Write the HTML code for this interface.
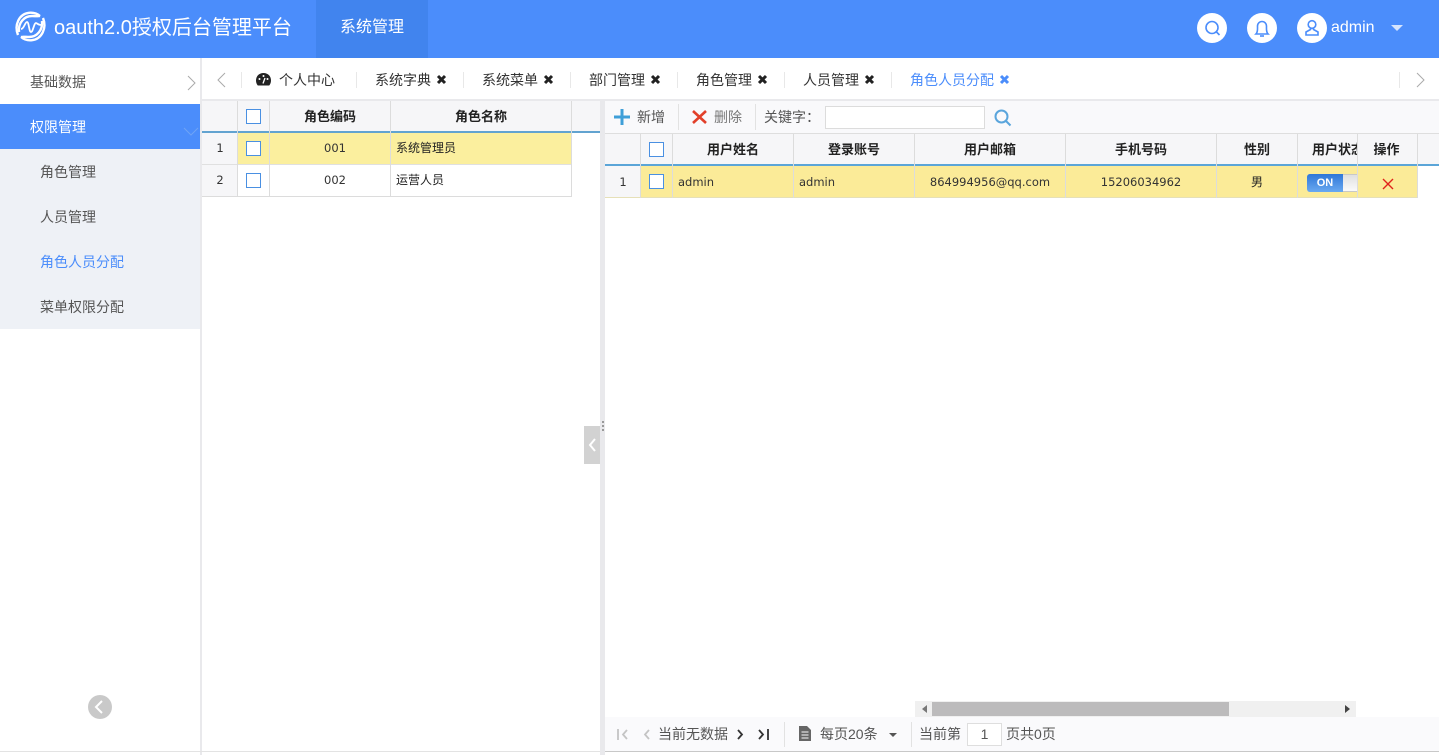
<!DOCTYPE html>
<html lang="zh-CN"><head><meta charset="utf-8"><title>oauth2.0授权后台管理平台</title>
<style>
html,body{margin:0;padding:0;background:#fff}
body{width:1439px;height:755px;overflow:hidden;position:relative;font-family:"Liberation Sans","Noto Sans CJK SC",sans-serif;font-size:14px;color:#333}
.a{position:absolute;box-sizing:border-box}
.t{position:absolute;white-space:nowrap;line-height:18px;height:18px}
.c{text-align:center}
.b{font-weight:700;color:#222;font-size:13px}
.d{font-family:"DejaVu Sans","Noto Sans CJK SC",sans-serif;font-size:11.5px;color:#333}
.s{font-size:12px;color:#222}
.g{color:#666}
.v{position:absolute;width:1px;background:#dcdcdc}
.k{position:absolute;width:15px;height:15px;border:1px solid #4a90e2;background:#fff;box-sizing:border-box}
svg{position:absolute;overflow:visible}
.x{top:75px;fill:none;stroke:#222;stroke-width:3}
</style></head><body>

<!-- header -->
<div class="a" style="left:0;top:0;width:1439px;height:58px;background:#4b8dfb"></div>
<div class="a" style="left:316px;top:0;width:112px;height:58px;background:#4184ee"></div>
<svg style="left:15px;top:11px" width="31" height="31" viewBox="0 0 31 31" fill="none" stroke="#fff">
<path d="M3 24C-1 14 4 3 14 1.800c4-.4 8 .6 11 3.200" stroke-width="2.400"/>
<path d="M4 21C3 12 9 5 17 5c3 0 6 .5 8 0" stroke-width="2.400"/>
<path d="M28 7c4 10-1 21-11 22.200-4 .4-8-.6-11-3.200" stroke-width="2.400"/>
<path d="M27 10c1 9-5 16-13 16-3 0-6-.5-8 0" stroke-width="2.400"/>
<path d="M6 18c3 0 4-7 6-7 2 0 2 10 4 10 2 0 3-9 5-9 1 0 2 2 5 2" stroke-width="1.800"/>
</svg>
<div class="t" style="left:54px;top:15px;height:26px;line-height:26px;font-size:20px;color:#fff">oauth2.0授权后台管理平台</div>
<div class="t c" style="left:316px;top:19px;width:112px;font-size:16px;color:#fff">系统管理</div>
<div class="a" style="left:1197px;top:13px;width:30px;height:30px;border-radius:50%;background:#fff"></div>
<svg style="left:1197px;top:13px" width="30" height="30" fill="none" stroke="#4b8dfb" stroke-width="1.600"><circle cx="15" cy="14.500" r="6"/><path d="M19.500 19l3 3"/></svg>
<div class="a" style="left:1247px;top:13px;width:30px;height:30px;border-radius:50%;background:#fff"></div>
<svg style="left:1247px;top:13px" width="30" height="30" fill="none" stroke="#4b8dfb" stroke-width="1.600"><path d="M9 21c2-2 1.500-5 1.500-8a4.500 4.500 0 0 1 9 0c0 3-.5 6 1.500 8z"/><path d="M13 23h4"/></svg>
<div class="a" style="left:1297px;top:13px;width:30px;height:30px;border-radius:50%;background:#fff"></div>
<svg style="left:1297px;top:13px" width="30" height="30" fill="none" stroke="#4b8dfb" stroke-width="1.600"><circle cx="15" cy="11.500" r="3.800"/><path d="M13.500 15v1.500L9 19v3h12v-3l-4.500-2.500V15"/></svg>
<div class="t" style="left:1331px;top:19px;font-size:16px;color:#fff">admin</div>
<svg style="left:1390px;top:25px" width="14" height="8"><path d="M1 0h12l-6 6z" fill="#d5e4fd"/></svg>

<!-- sidebar -->
<div class="a" style="left:200px;top:58px;width:2px;height:697px;background:#e9e9ec"></div>
<div class="t g" style="left:30px;top:73px;color:#555">基础数据</div>
<svg style="left:187px;top:75px" width="10" height="16" fill="none" stroke="#aaa"><path d="M1 1l7 7-7 7"/></svg>
<div class="a" style="left:0;top:104px;width:200px;height:45px;background:#4b8dfb"></div>
<div class="t" style="left:30px;top:118px;color:#fff">权限管理</div>
<svg style="left:183px;top:127px" width="16" height="9" fill="none" stroke="#6fa3f5"><path d="M1 1l7 7 7-7"/></svg>
<div class="a" style="left:0;top:149px;width:200px;height:180px;background:#eef1f6"></div>
<div class="t" style="left:40px;top:163px;color:#555">角色管理</div>
<div class="t" style="left:40px;top:208px;color:#555">人员管理</div>
<div class="t" style="left:40px;top:253px;color:#4b8dfb">角色人员分配</div>
<div class="t" style="left:40px;top:298px;color:#555">菜单权限分配</div>
<div class="a" style="left:88px;top:695px;width:24px;height:24px;border-radius:50%;background:#c9c9c9"></div>
<svg style="left:88px;top:695px" width="24" height="24" fill="none" stroke="#fff" stroke-width="2"><path d="M14 6l-6 6 6 6"/></svg>

<!-- tabs -->
<svg style="left:217px;top:72px" width="9" height="16" fill="none" stroke="#aaa"><path d="M8 1L1 8l7 7"/></svg>
<div class="v" style="left:241px;top:72px;height:16px;background:#e8e8e8"></div>
<svg style="left:256px;top:73px" width="15" height="13" viewBox="0 0 15 13"><path d="M7.500 0C3 0 0 3.300 0 7.500c0 2 .7 3.800 1.800 5h11.400c1.100-1.200 1.800-3 1.800-5C15 3.300 12 0 7.500 0z" fill="#222"/><circle cx="7.500" cy="3" r="1" fill="#fff"/><circle cx="3.500" cy="6" r="1" fill="#fff"/><circle cx="11.500" cy="6" r="1" fill="#fff"/><path d="M7 10.500L9 5" stroke="#fff" stroke-width="1.300"/></svg>
<div class="t" style="left:279px;top:71px">个人中心</div>
<div class="v" style="left:356px;top:72px;height:16px;background:#e8e8e8"></div>
<div class="t" style="left:375px;top:71px">系统字典</div><svg class="x" style="left:437px" width="9" height="9"><path d="M1 1l7 7M8 1L1 8"/></svg>
<div class="v" style="left:463px;top:72px;height:16px;background:#e8e8e8"></div>
<div class="t" style="left:482px;top:71px">系统菜单</div><svg class="x" style="left:544px" width="9" height="9"><path d="M1 1l7 7M8 1L1 8"/></svg>
<div class="v" style="left:570px;top:72px;height:16px;background:#e8e8e8"></div>
<div class="t" style="left:589px;top:71px">部门管理</div><svg class="x" style="left:651px" width="9" height="9"><path d="M1 1l7 7M8 1L1 8"/></svg>
<div class="v" style="left:677px;top:72px;height:16px;background:#e8e8e8"></div>
<div class="t" style="left:696px;top:71px">角色管理</div><svg class="x" style="left:758px" width="9" height="9"><path d="M1 1l7 7M8 1L1 8"/></svg>
<div class="v" style="left:784px;top:72px;height:16px;background:#e8e8e8"></div>
<div class="t" style="left:803px;top:71px">人员管理</div><svg class="x" style="left:865px" width="9" height="9"><path d="M1 1l7 7M8 1L1 8"/></svg>
<div class="v" style="left:891px;top:72px;height:16px;background:#e8e8e8"></div>
<div class="t" style="left:910px;top:71px;color:#4b8dfb">角色人员分配</div><svg class="x" style="left:1000px;stroke:#4b8dfb" width="9" height="9"><path d="M1 1l7 7M8 1L1 8"/></svg>
<div class="v" style="left:1399px;top:72px;height:16px;background:#e8e8e8"></div>
<svg style="left:1416px;top:72px" width="9" height="16" fill="none" stroke="#aaa"><path d="M1 1l7 7-7 7"/></svg>
<div class="a" style="left:202px;top:99px;width:1237px;height:2px;background:#e9e9ec"></div>

<!-- left grid -->
<div class="a" style="left:202px;top:101px;width:398px;height:30px;background:#f6f6f8"></div>
<div class="a" style="left:202px;top:131px;width:398px;height:2px;background:#62a3d0"></div>
<div class="a" style="left:202px;top:133px;width:36px;height:64px;background:#f6f6f8"></div>
<div class="a" style="left:238px;top:133px;width:334px;height:32px;background:#fbef9e"></div>
<div class="a" style="left:202px;top:164px;width:370px;height:1px;background:#e0e0e0"></div>
<div class="a" style="left:202px;top:196px;width:370px;height:1px;background:#dcdcdc"></div>
<div class="v" style="left:237px;top:101px;height:96px"></div>
<div class="v" style="left:269px;top:101px;height:96px"></div>
<div class="v" style="left:390px;top:101px;height:96px"></div>
<div class="v" style="left:571px;top:101px;height:96px"></div>
<div class="k" style="left:246px;top:109px"></div>
<div class="k" style="left:246px;top:141px"></div>
<div class="k" style="left:246px;top:173px"></div>
<div class="t c b" style="left:270px;top:108px;width:120px">角色编码</div>
<div class="t c b" style="left:391px;top:108px;width:180px">角色名称</div>
<div class="t c d" style="left:202px;top:139px;width:36px">1</div>
<div class="t c d" style="left:202px;top:171px;width:36px">2</div>
<div class="t c d" style="left:275px;top:139px;width:120px">001</div>
<div class="t c d" style="left:275px;top:171px;width:120px">002</div>
<div class="t s" style="left:396px;top:139px">系统管理员</div>
<div class="t s" style="left:396px;top:171px">运营人员</div>

<!-- splitter -->
<div class="a" style="left:600px;top:101px;width:5px;height:654px;background:#e9e9ec"></div>
<div class="a" style="left:584px;top:426px;width:16px;height:38px;background:#d2d2d2"></div>
<svg style="left:584px;top:426px" width="16" height="38" fill="none" stroke="#fff" stroke-width="2"><path d="M11 13l-5 6 5 6"/></svg>
<div class="a" style="left:602px;top:421px;width:2px;height:2px;background:#999"></div>
<div class="a" style="left:602px;top:425px;width:2px;height:2px;background:#999"></div>
<div class="a" style="left:602px;top:429px;width:2px;height:2px;background:#999"></div>

<!-- toolbar -->
<div class="a" style="left:605px;top:101px;width:834px;height:33px;background:#f9f9fb"></div>
<svg style="left:614px;top:109px" width="16" height="16"><path d="M6.500 0h3v6.500H16v3H9.500V16h-3V9.500H0v-3h6.500z" fill="#3f9fd8"/></svg>
<div class="t" style="left:637px;top:108px;color:#555">新增</div>
<div class="v" style="left:678px;top:104px;height:26px;background:#e2e2e2"></div>
<svg style="left:692px;top:110px" width="15" height="14" fill="none" stroke="#e2402a" stroke-width="2.600"><path d="M1 1l13 12M14 1L1 13"/></svg>
<div class="t" style="left:714px;top:108px;color:#777">删除</div>
<div class="v" style="left:755px;top:104px;height:26px;background:#e2e2e2"></div>
<div class="t" style="left:764px;top:108px;color:#555">关键字：</div>
<div class="a" style="left:825px;top:106px;width:160px;height:23px;background:#fff;border:1px solid #dcdcdc"></div>
<svg style="left:994px;top:109px" width="18" height="18" fill="none" stroke="#5aa5dc" stroke-width="2"><circle cx="7.500" cy="7.500" r="6"/><path d="M12 12l4.500 4.500"/></svg>

<!-- right grid -->
<div class="a" style="left:605px;top:133px;width:834px;height:1px;background:#dedede"></div>
<div class="a" style="left:605px;top:134px;width:834px;height:31px;background:#f6f6f8"></div>
<div class="a" style="left:605px;top:166px;width:36px;height:32px;background:#f6f6f8"></div>
<div class="a" style="left:641px;top:166px;width:777px;height:32px;background:#fbeb98"></div>
<div class="a" style="left:605px;top:197px;width:813px;height:1px;background:#e6e0b8"></div>
<div class="a" style="left:605px;top:164px;width:834px;height:2px;background:#5ba5d8"></div>
<div class="v" style="left:640px;top:134px;height:64px"></div>
<div class="v" style="left:672px;top:134px;height:64px"></div>
<div class="v" style="left:793px;top:134px;height:64px"></div>
<div class="v" style="left:914px;top:134px;height:64px"></div>
<div class="v" style="left:1065px;top:134px;height:64px"></div>
<div class="v" style="left:1216px;top:134px;height:64px"></div>
<div class="v" style="left:1297px;top:134px;height:64px"></div>
<div class="v" style="left:1357px;top:134px;height:64px"></div>
<div class="v" style="left:1417px;top:134px;height:64px"></div>
<div class="k" style="left:649px;top:142px"></div>
<div class="k" style="left:649px;top:174px"></div>
<div class="t c b" style="left:673px;top:141px;width:120px">用户姓名</div>
<div class="t c b" style="left:794px;top:141px;width:120px">登录账号</div>
<div class="t c b" style="left:915px;top:141px;width:150px">用户邮箱</div>
<div class="t c b" style="left:1066px;top:141px;width:150px">手机号码</div>
<div class="t c b" style="left:1217px;top:141px;width:80px">性别</div>
<div class="t b" style="left:1298px;top:141px;width:59px;overflow:hidden;padding-left:14px;box-sizing:border-box">用户状态</div>
<div class="t c b" style="left:1357px;top:141px;width:59px">操作</div>
<div class="t c d" style="left:605px;top:173px;width:36px">1</div>
<div class="t d" style="left:678px;top:173px">admin</div>
<div class="t d" style="left:799px;top:173px">admin</div>
<div class="t c d" style="left:915px;top:173px;width:150px">864994956@qq.com</div>
<div class="t c d" style="left:1066px;top:173px;width:150px">15206034962</div>
<div class="t c s" style="left:1217px;top:173px;width:80px">男</div>
<div class="a" style="left:1307px;top:174px;width:50px;height:18px;border:1px solid #c8c8c8;border-right:0;border-radius:3px 0 0 3px;background:linear-gradient(#e0e0e0,#fafafa);overflow:hidden"></div>
<div class="a" style="left:1307px;top:174px;width:36px;height:18px;border-radius:3px 0 0 3px;background:linear-gradient(#2f77d8,#6aa9f0);color:#fff;font-size:11px;font-weight:700;line-height:19px;text-align:center">ON</div>
<svg style="left:1382px;top:178px" width="12" height="12" fill="none" stroke="#e0231b" stroke-width="1.400"><path d="M1 1l10 10M11 1L1 11"/></svg>

<!-- scrollbar -->
<div class="a" style="left:915px;top:701px;width:441px;height:16px;background:#f0f0f0"></div>
<div class="a" style="left:932px;top:702px;width:297px;height:14px;background:#bcbbbc"></div>
<svg style="left:922px;top:705px" width="6" height="8"><path d="M5 0v8L0 4z" fill="#777"/></svg>
<svg style="left:1345px;top:705px" width="6" height="8"><path d="M0 0v8l5-4z" fill="#444"/></svg>

<!-- pager -->
<div class="a" style="left:605px;top:717px;width:834px;height:34px;background:#fafafc"></div>
<div class="a" style="left:605px;top:751px;width:834px;height:1px;background:#c8c8c8"></div>
<div class="a" style="left:0;top:751px;width:600px;height:1px;background:#e3e3e3"></div>
<svg style="left:617px;top:729px" width="12" height="11" fill="none" stroke="#c4c4c4" stroke-width="1.800"><path d="M1 0v11M10 1L6 5.500l4 4.500"/></svg>
<svg style="left:642px;top:729px" width="8" height="11" fill="none" stroke="#c4c4c4" stroke-width="1.800"><path d="M7 1L3 5.500 7 10"/></svg>
<div class="t" style="left:658px;top:725px;color:#555">当前无数据</div>
<svg style="left:737px;top:729px" width="8" height="11" fill="none" stroke="#333" stroke-width="1.800"><path d="M1 1l4 4.500L1 10"/></svg>
<svg style="left:758px;top:729px" width="12" height="11" fill="none" stroke="#333" stroke-width="1.800"><path d="M1 1l4 4.500L1 10M10 0v11"/></svg>
<div class="v" style="left:784px;top:722px;height:25px;background:#e2e2e2"></div>
<svg style="left:799px;top:726px" width="12" height="15"><path d="M0 0h8l4 4v11H0z" fill="#666"/><path d="M2.500 6h7M2.500 9h7M2.500 12h7" stroke="#fafafc"/></svg>
<div class="t" style="left:820px;top:725px;color:#555">每页20条</div>
<svg style="left:889px;top:733px" width="8" height="5"><path d="M0 0h8L4 4z" fill="#555"/></svg>
<div class="v" style="left:911px;top:722px;height:25px;background:#e2e2e2"></div>
<div class="t" style="left:919px;top:725px;color:#555">当前第</div>
<div class="a" style="left:967px;top:723px;width:35px;height:23px;background:#fff;border:1px solid #dedede"></div>
<div class="t c" style="left:967px;top:725px;width:35px;color:#555">1</div>
<div class="t" style="left:1006px;top:725px;color:#555">页共0页</div>

</body></html>
